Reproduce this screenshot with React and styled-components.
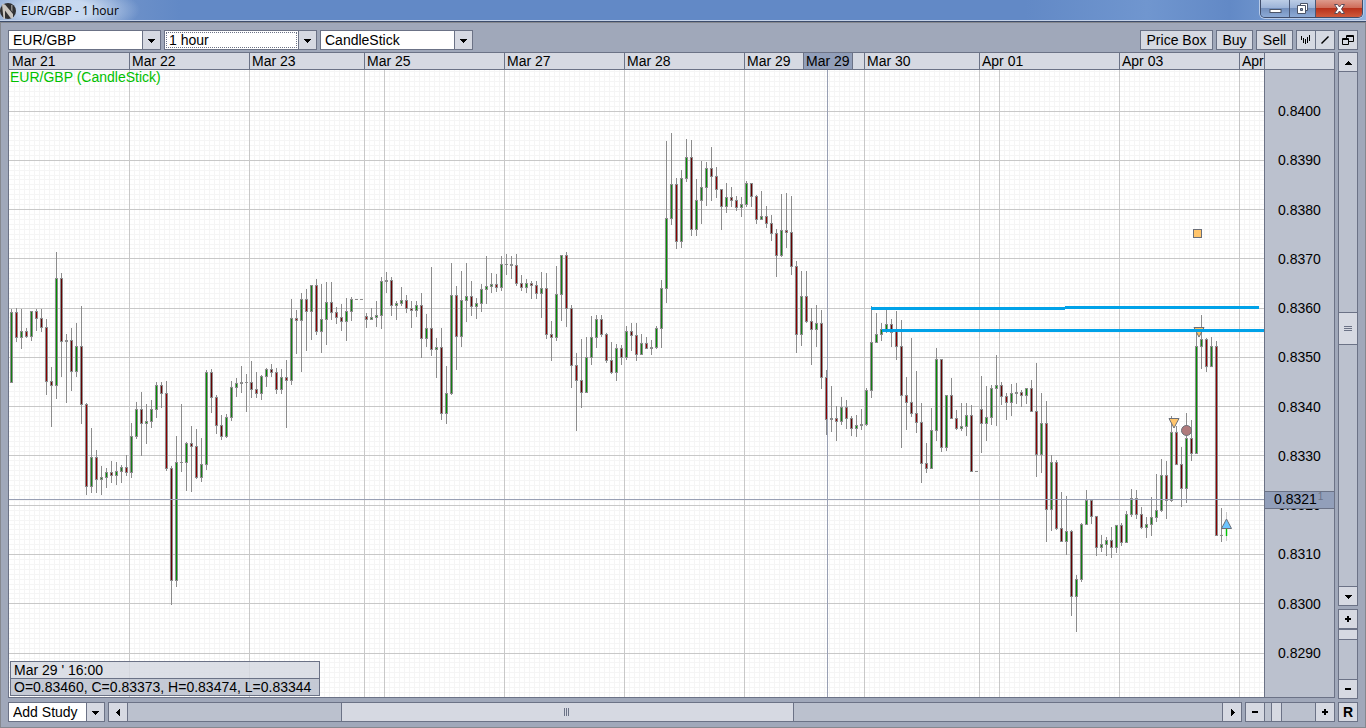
import React from "react";
import styled, { createGlobalStyle, css } from "styled-components";

const color = {
  frame: "#a0a8ba",
  line: "#6b7286",
  face: "#d6d9e2",
  track: "#bbc1ce",
  mark: "#929fba",
  grid: "#c8c8c8",
  fine: "#f5f5f5",
  candle: "#8c8c8c",
  trend: "#00a2e8",
};

const Global = createGlobalStyle`
  *, *::before, *::after { box-sizing: border-box; }
  body {
    margin: 0;
    font: 14px/16px "Liberation Sans", Arial, sans-serif;
    color: #000;
  }
  button, select { font: inherit; color: inherit; }
`;

const Window = styled.div`
  min-height: 100vh;
  display: flex;
  flex-direction: column;
  background: ${color.frame};
`;

const TitleBar = styled.header`
  display: flex;
  align-items: flex-start;
  height: 22px;
  padding-right: 3px;
  background:
    radial-gradient(ellipse 80px 26px at 60px 10px, rgba(214, 228, 246, 0.85) 40%, rgba(214, 228, 246, 0) 100%),
    linear-gradient(90deg, #86a3d0 0, #6289c6 180px, #6289c6 75%, #7096cf 84%, #6289c6 90%, #8fb2de 100%);
  border-bottom: 1px solid #3d4d6c;
  box-shadow: inset 0 -1px 0 #c3d1e8;
`;

const Title = styled.h1`
  flex: 1;
  margin: 0 0 0 4px;
  font: 12px/21px "Open Sans", "Noto Sans", sans-serif;
`;

const LogoMark = styled.svg`
  width: 17px;
  height: 20px;
`;

const WindowButtons = styled.div`
  display: flex;
  width: 103px;
  height: 18px;
  border: 1px solid #3f4d6b;
  border-top: 0;
  border-radius: 0 0 5px 5px;
  overflow: hidden;
  box-shadow: 0 0 0 1px #b8cbe8;
`;

const WindowButton = styled.button`
  flex: ${(p) => (p.$close ? "0 0 47px" : p.$wide ? "0 0 28px" : "1")};
  display: flex;
  align-items: center;
  justify-content: center;
  padding: 0;
  border: 0;
  border-left: ${(p) => (p.$wide ? "0" : "1px solid #4a5876")};
  background: ${(p) =>
    p.$close
      ? "linear-gradient(#dd9a8c 0, #cf6d5a 45%, #b8321c 50%, #cf5a3c 100%)"
      : "linear-gradient(#bccde6 0, #9db4d8 45%, #7490bd 50%, #8caad6 100%)"};
`;

const Workspace = styled.main`
  flex: 1;
  display: flex;
  flex-direction: column;
  padding: 7px 7px 5px;
  border: 1px solid #85888f;
`;

const Toolbar = styled.div`
  display: flex;
  gap: 3px;
  height: 20px;
  margin-bottom: 2px;
`;

const Spacer = styled.div`
  flex: 1;
`;

const Picker = styled.div`
  display: grid;
  grid-template-columns: 1fr 18px;
  width: ${(p) => p.$width}px;
  height: 20px;
  border: 1px solid ${color.line};
  background: #fff;
`;

const PickerField = styled.select`
  grid-area: 1 / 1 / 2 / 3;
  appearance: none;
  min-width: 0;
  padding: 0 0 0 4px;
  border: 0;
  border-radius: 0;
  background: transparent;
  outline: 0;
`;

const PickerArrow = styled.span`
  grid-area: 1 / 2;
  display: flex;
  align-items: center;
  justify-content: center;
  border-left: 1px solid ${color.line};
  background: ${color.face};
  pointer-events: none;
`;

const FocusRing = styled.span`
  grid-area: 1 / 1;
  margin: 1px;
  border: 1px dotted #6b7286;
  pointer-events: none;
`;

const Button = styled.button`
  display: flex;
  flex: none;
  align-items: center;
  justify-content: center;
  width: ${(p) => p.$width || 20}px;
  height: 20px;
  padding: 0;
  border: 1px solid ${color.line};
  background: ${color.face};
  font-weight: ${(p) => (p.$bold ? 700 : 400)};
  ${(p) => p.$joined && css`margin-left: -4px;`}
`;

const Middle = styled.div`
  flex: 1;
  display: flex;
  gap: 3px;
`;

const ChartPanel = styled.section`
  flex: 1;
  min-width: 0;
  margin-bottom: 1px;
  display: grid;
  grid-template: 17px minmax(620px, 1fr) / minmax(0, 1fr) 70px;
  border: 1px solid ${color.line};
`;

const DateAxis = styled.div`
  display: flex;
  overflow: hidden;
  background: ${color.face};
  border-bottom: 1px solid ${color.line};
`;

const DateCell = styled.span`
  flex: ${(p) => (p.$width ? `0 0 ${p.$width}px` : "1 0 0")};
  overflow: hidden;
  padding-left: 3px;
  white-space: nowrap;
  background: ${(p) => (p.$active ? color.mark : "transparent")};
  & + & {
    padding-left: 2px;
    border-left: 1px solid ${color.line};
  }
`;

const AxisCorner = styled.div`
  background: ${color.face};
  border-left: 1px solid ${color.line};
  border-bottom: 1px solid ${color.line};
`;

const Plot = styled.div`
  position: relative;
  display: flex;
  overflow: hidden;
  background: #fff;
`;

const Drawing = styled.svg`
  flex: 1;
  min-width: 0;
`;

const SeriesName = styled.span`
  position: absolute;
  left: 1px;
  top: 0;
  line-height: 14px;
  color: #00c000;
`;

const Readout = styled.div`
  position: absolute;
  left: 1px;
  bottom: 1px;
  min-width: 310px;
  border: 1px solid ${color.line};
  white-space: nowrap;
`;

const ReadoutRow = styled.div`
  height: 16px;
  padding: 0 3px;
  background: ${(p) => (p.$values ? "rgba(187, 193, 206, 0.85)" : "rgba(214, 217, 226, 0.85)")};
  & + & {
    height: 17px;
    border-top: 1px solid ${color.line};
  }
`;

const PriceAxis = styled.div`
  position: relative;
  display: flex;
  flex-direction: column;
  justify-content: space-between;
  padding: 33px 0 36px 13px;
  background: ${color.track};
  border-left: 1px solid ${color.line};
`;

const PriceTag = styled.span`
  position: absolute;
  top: 421px;
  left: 0;
  right: 0;
  display: flex;
  align-items: flex-start;
  height: 18px;
  padding-left: 9px;
  border: solid ${color.line};
  border-width: 1px 0;
  background: ${color.mark};
  line-height: 15px;
  small {
    margin-left: 1px;
    font-size: 10px;
    line-height: 10px;
    color: #6b7286;
  }
`;

const SideColumn = styled.div`
  display: flex;
  flex-direction: column;
  gap: 3px;
  width: 20px;
`;

const Bar = styled.div`
  display: flex;
  flex-direction: ${(p) => (p.$vertical ? "column" : "row")};
  flex: ${(p) => (p.$size ? `0 0 ${p.$size}px` : "1")};
  min-width: 0;
  background: ${color.track};
  box-shadow: inset 0 0 0 1px ${color.line};
`;

const Gap = styled.div`
  flex: ${(p) => p.$grow || 0} 1 ${(p) => p.$basis || 0}px;
`;

const Thumb = styled.div`
  display: flex;
  align-items: center;
  justify-content: center;
  flex: ${(p) => (p.$grow ? `${p.$grow} 1 0` : `0 0 ${p.$size}px`)};
  border: 1px solid ${color.line};
  background: ${color.face};
`;

const BottomRow = styled.div`
  display: flex;
  gap: 3px;
  height: 20px;
  margin-top: 3px;
`;

/* Hourly candles five pixels apart: direction, high, body top, body bottom, low.
   "u" rises, "d" falls, "n" closes where it opened. */
const candles = `
u309,312,383,383 d308,312,338,342 u309,331,338,349 d328,331,337,338 u311,311,337,341 d309,311,319,331
d309,318,328,332 d319,327,382,395 d367,381,386,427 u252,278,386,399 d273,278,342,377 n334,340,342,403
d328,340,372,391 u323,346,372,377 d306,346,405,424 d403,404,487,495 u428,457,487,493 d450,457,480,493
u466,477,480,495 u468,472,478,488 d461,472,476,483 u462,471,476,485 u465,467,472,483 d455,467,473,476
u423,436,473,478 u402,409,437,439 d392,409,424,456 u404,421,424,444 u400,409,422,428 u382,385,410,418
d382,385,394,408 d381,393,469,471 d466,468,581,605 u436,462,581,587 n404,462,463,472 u442,443,463,491
d426,443,447,492 d429,446,478,479 u438,464,478,482 u370,372,465,470 d369,372,398,413 d395,397,426,434
d415,425,437,440 u414,417,437,438 u381,387,418,421 u378,383,388,397 n366,382,384,393 n374,382,383,412
d361,382,390,398 d372,389,394,398 u375,376,394,400 u368,369,377,387 d364,369,373,377 d368,372,390,394
u369,377,390,394 d360,377,381,428 u299,318,381,385 d310,318,321,354 u293,299,321,372 d289,299,312,351
u285,285,312,340 d279,285,332,335 u284,319,332,353 u282,302,320,345 d282,302,313,320 d307,312,318,324
d304,317,322,331 u298,311,322,341 u297,299,312,321 n299,299,300,300 n299,299,300,300 d313,316,320,328
u308,317,320,320 u301,315,318,327 u277,281,316,329 n272,280,282,293 d277,280,306,316 u301,303,306,320
u287,300,304,306 d295,300,309,313 d301,308,311,328 u301,305,311,317 d293,305,339,358 u314,328,339,347
d267,328,350,356 u338,347,350,378 d328,347,414,420 u366,393,414,424 u263,295,394,395 d286,295,337,370
u271,300,337,347 u263,296,301,322 d281,296,307,316 u298,303,307,319 u284,289,304,312 u256,286,290,304
u273,284,287,293 d274,284,288,292 u256,264,288,291 n254,264,265,275 n256,264,266,279 d254,265,284,286
d275,283,288,291 u279,283,288,293 d281,283,286,299 d281,285,294,299 u272,288,294,318 d273,288,335,339
d321,334,338,361 u266,294,338,341 u255,255,295,321 d252,255,309,327 d305,308,366,388 d353,365,381,431
d339,380,393,408 u337,357,393,393 u316,337,358,365 u315,319,338,348 d315,319,335,337 d333,334,361,363
d342,360,373,374 u344,348,373,381 d345,348,358,365 u326,331,358,360 d323,331,336,351 d323,335,355,361
u334,343,355,355 d337,343,349,349 n340,347,349,355 u326,328,348,349 u280,288,329,348 u141,218,289,303
u133,184,219,225 d178,184,242,249 u170,178,242,248 u139,157,179,182 d140,157,230,236 u179,200,230,236
u161,187,201,224 u162,168,188,206 d147,168,177,201 d167,176,190,198 d189,189,207,230 u183,197,207,213
d187,197,201,207 d196,200,208,211 u197,204,208,217 u181,183,205,207 d183,183,197,207 d195,196,220,224
u191,216,220,220 d206,216,224,228 d215,223,234,241 d229,233,256,277 u194,230,256,257 d193,230,233,248
d196,232,267,275 d261,266,335,353 u271,296,335,346 d271,296,322,323 d308,321,330,365 u305,323,330,347
d310,323,378,389 d370,377,420,435 n386,418,420,432 d406,418,422,441 u397,407,422,425 d400,407,419,429
d416,418,429,436 u415,425,429,437 n409,424,426,430 u388,390,425,426 u306,342,391,398 u313,334,343,343
u323,329,335,341 u310,324,331,333 d319,324,333,347 d311,331,347,360 d320,346,396,448 d377,395,403,430
d338,402,414,417 d371,413,423,433 d403,422,464,483 d443,463,469,473 u408,430,469,469 u348,359,431,441
d359,359,448,452 u395,395,448,451 d378,395,419,419 d410,418,429,430 u403,426,429,431 u403,415,427,436
d405,415,472,472 n471,471,472,472 d376,409,424,453 u386,417,424,441 u385,388,418,425 u355,385,389,426
d382,385,397,405 d393,396,403,420 u384,393,403,416 n383,392,394,404 d390,392,396,407 u388,388,396,404
d380,388,412,412 d363,411,455,477 u393,423,455,473 d401,423,510,542 u455,462,510,531 d460,462,529,530
d492,528,542,542 u496,531,542,555 d530,531,597,616 u575,579,597,632 u523,524,580,582 u490,500,525,525
d500,500,517,524 d516,516,548,556 u535,544,548,552 u537,540,545,556 d527,540,548,558 u525,525,548,553
d523,525,543,546 u511,514,543,543 u489,498,515,517 d490,498,515,519 d507,514,528,529 u517,524,528,538
u497,517,525,536 u474,510,518,522 u459,475,511,512 d461,475,501,519 u416,432,501,502 d426,432,465,465
d447,464,489,507 u413,438,489,503 d420,438,454,461 u333,346,454,454 u315,339,347,369 d338,339,367,372
u337,346,367,367 d341,346,536,536 n508,535,536,542`
  .trim()
  .split(/\s+/)
  .map((entry, i) => {
    const [high, top, bottom, low] = entry.slice(1).split(",").map(Number);
    return { x: 11 + i * 5, dir: entry[0], high, top, bottom, low };
  });

const coreColor = (dir, x) => {
  const strong = x % 2 === 0;
  if (dir === "u") return strong ? "#009000" : "#147d14";
  return strong ? "#8c0000" : "#640000";
};

function Candle({ x, dir, high, top, bottom, low }) {
  return (
    <g>
      <rect x={x} y={high} width="1" height={low - high} fill={color.candle} />
      <rect x={x - 1} y={top} width="3" height={bottom - top} fill={color.candle} />
      {dir !== "n" && bottom - top > 2 && (
        <rect x={x} y={top + 1} width="1" height={bottom - top - 2} fill={coreColor(dir, x)} />
      )}
    </g>
  );
}

const dayLines = [129, 249, 364, 384, 504, 624, 744, 864, 979, 999, 1119, 1239];
const priceY = (step) => Math.floor(111 + step * 4.928);
const fineColumns = Array.from({ length: 400 }, (_, i) => 14 + i * 5);
const fineRows = Array.from({ length: 128 }, (_, i) => i - 8);

function CandleChart() {
  return (
    <Drawing role="img" aria-label="EUR/GBP hourly candlestick chart">
      <g transform="translate(-9 -70)" shapeRendering="crispEdges">
        {fineColumns.map((x) => (
          <rect key={x} x={x} y="70" width="1" height="100%" fill={color.fine} />
        ))}
        {fineRows.map((n) => (
          <rect key={n} x="9" y={priceY(n)} width="100%" height="1" fill={color.fine} />
        ))}
        {fineRows.filter((n) => n >= 0 && n % 10 === 0).map((n) => (
          <rect key={n} x="9" y={priceY(n)} width="100%" height="1" fill={color.grid} />
        ))}
        {dayLines.map((x) => (
          <rect key={x} x={x} y="70" width="1" height="100%" fill={color.grid} />
        ))}
        {candles.map((c) => <Candle key={c.x} {...c} />)}
        <rect x="1226" y="512" width="1" height="29" fill="#c8c8c8" />
        <rect x="1225" y="527" width="3" height="9" fill="#c8e6c8" />
        <rect x="1226" y="527" width="1" height="9" fill="#00c800" />
        <rect x="827" y="70" width="1" height="100%" fill="#989fb4" />
        <rect x="9" y="499" width="100%" height="1" fill="#989fb4" />
      </g>
      <g transform="translate(-9 -70)" stroke="#6b6f78" strokeWidth="1">
        <rect x="1193.5" y="229.5" width="8" height="8" fill="#ffc56c" />
        <path d="M1194 327.5h10l-5 9.5z" fill="#ffc56c" />
        <path d="M1169 418.5h10l-5 9.5z" fill="#ffc56c" />
        <circle cx="1186.5" cy="430.5" r="5" fill="#b07a7c" />
        <path d="M1221.5 528.5h10l-5-9.5z" fill="#6cc4ff" />
      </g>
      <g transform="translate(-9 -70)" fill={color.trend}>
        <rect x="871" y="307" width="194" height="3" />
        <rect x="1065" y="306" width="194" height="3" />
        <rect x="882" y="329" width="383" height="3" />
      </g>
    </Drawing>
  );
}

const arrows = {
  down: "M0 2h7v1h-1v1h-1v1h-1v1h-1v-1h-1v-1h-1v-1h-1z",
  up: "M0 6h7v-1h-1v-1h-1v-1h-1v-1h-1v1h-1v1h-1v1h-1z",
  left: "M5 0v7h-1v-1h-1v-1h-1v-1h-1v-1h1v-1h1v-1h1v-1z",
  right: "M2 0v7h1v-1h1v-1h1v-1h1v-1h-1v-1h-1v-1h-1v-1z",
  plus: "M2 0h2v2h2v2h-2v2h-2v-2h-2v-2h2z",
  minus: "M0 2h6v2h-6z",
};

function Glyph({ name }) {
  return (
    <svg width="7" height="7" shapeRendering="crispEdges" aria-hidden="true">
      <path d={arrows[name]} />
    </svg>
  );
}

function Dropdown({ label, value, width, focused }) {
  return (
    <Picker $width={width}>
      <PickerField aria-label={label} defaultValue={value}>
        <option>{value}</option>
      </PickerField>
      {focused && <FocusRing />}
      <PickerArrow><Glyph name="down" /></PickerArrow>
    </Picker>
  );
}

function Logo() {
  return (
    <LogoMark viewBox="0 0 17 20" aria-hidden="true">
      <circle cx="8" cy="11" r="8" fill="#303032" />
      <path d="M2 4l3 .5 8 9.500V18l-2 .5L5 10.500V19H3.500z" fill="#c9c5c0" />
      <path d="M11 5h1.500v7L11 10z" fill="#8f8d8b" />
    </LogoMark>
  );
}

const days = [
  ["Mar 21", 120], ["Mar 22", 120], ["Mar 23", 115], ["Mar 25", 140], ["Mar 27", 120], ["Mar 28", 120],
  ["Mar 29", 59], ["Mar 29", 49, true], ["", 12], ["Mar 30", 115], ["Apr 01", 140], ["Apr 03", 120], ["Apr"],
];

const prices = ["0.8400", "0.8390", "0.8380", "0.8370", "0.8360", "0.8350", "0.8340", "0.8330", "0.8320", "0.8310", "0.8300", "0.8290"];

export default function App() {
  return (
    <Window>
      <Global />
      <TitleBar>
        <Logo />
        <Title>EUR/GBP - 1 hour</Title>
        <WindowButtons>
          <WindowButton $wide aria-label="Minimize">
            <svg width="13" height="16"><rect x="1" y="8.500" width="11" height="3" fill="#fff" stroke="#4b5468" /></svg>
          </WindowButton>
          <WindowButton aria-label="Restore">
            <svg width="13" height="16" stroke="#4b5468" fill="#fff">
              <path d="M4.500 2.500h7v7h-7z" />
              <path d="M1.500 4.500h8v8h-8z" />
              <path d="M4.500 7.500h2v2h-2z" fill="#7f98c0" />
            </svg>
          </WindowButton>
          <WindowButton $close aria-label="Close">
            <svg width="13" height="16">
              <path d="M1.500 3.500h3l2 2.500 2-2.500h3l-3 4.500 3 4.500h-3l-2-2.500-2 2.500h-3l3-4.500z" fill="#fff" stroke="#5b4b58" />
            </svg>
          </WindowButton>
        </WindowButtons>
      </TitleBar>

      <Workspace>
        <Toolbar>
          <Dropdown label="Instrument" value="EUR/GBP" width={153} />
          <Dropdown label="Period" value="1 hour" width={153} focused />
          <Dropdown label="Chart type" value="CandleStick" width={153} />
          <Spacer />
          <Button $width={73}>Price Box</Button>
          <Button $width={37}>Buy</Button>
          <Button $width={37}>Sell</Button>
          <Button aria-label="Chart style">
            <svg width="10" height="10" shapeRendering="crispEdges">
              <path d="M0 1h1v4h-1zM2 3h1v5h-1zM4 4h1v5h-1zM6 2h1v6h-1zM8 0h1v6h-1z" />
            </svg>
          </Button>
          <Button $joined aria-label="Draw line">
            <svg width="10" height="10"><path d="M1.500 8.500l7-7" stroke="#000" strokeWidth="1.500" /></svg>
          </Button>
          <Button aria-label="Detach window">
            <svg width="12" height="12" fill="none" stroke="#000">
              <path d="M4.500 1.500h7v6h-7zM4 2.500h7" />
              <path d="M.5 4.500h6v6h-6zM1 5.500h6" fill={color.face} />
            </svg>
          </Button>
        </Toolbar>

        <Middle>
          <ChartPanel>
            <DateAxis>
              {days.map(([label, width, active], i) => (
                <DateCell key={i} $width={width} $active={active}>{label}</DateCell>
              ))}
            </DateAxis>
            <AxisCorner />
            <Plot>
              <CandleChart />
              <SeriesName>EUR/GBP (CandleStick)</SeriesName>
              <Readout>
                <ReadoutRow>Mar 29 ' 16:00</ReadoutRow>
                <ReadoutRow $values>O=0.83460, C=0.83373, H=0.83474, L=0.83344</ReadoutRow>
              </Readout>
            </Plot>
            <PriceAxis>
              {prices.map((p) => <span key={p}>{p}</span>)}
              <PriceTag>0.8321<small>1</small></PriceTag>
            </PriceAxis>
          </ChartPanel>

          <SideColumn>
            <Bar $vertical>
              <Button aria-label="Scroll up"><Glyph name="up" /></Button>
              <Gap $grow={240} />
              <Thumb $size={33}>
                <svg width="8" height="6" shapeRendering="crispEdges"><path d="M0 0h8v1H0zM0 2h8v1H0zM0 4h8v1H0z" fill={color.line} /></svg>
              </Thumb>
              <Gap $grow={241} />
              <Button aria-label="Scroll down"><Glyph name="down" /></Button>
            </Bar>
            <Bar $vertical $size={90}>
              <Button aria-label="Zoom in prices"><Glyph name="plus" /></Button>
              <Thumb $size={11} />
              <Gap $grow={1} />
              <Button aria-label="Zoom out prices"><Glyph name="minus" /></Button>
            </Bar>
          </SideColumn>
        </Middle>

        <BottomRow>
          <Dropdown label="Add Study" value="Add Study" width={97} />
          <Bar>
            <Button aria-label="Scroll left"><Glyph name="left" /></Button>
            <Gap $grow={213} />
            <Thumb $grow={452}>
              <svg width="6" height="8" shapeRendering="crispEdges"><path d="M0 0h1v8H0zM2 0h1v8H2zM4 0h1v8H4z" fill={color.line} /></svg>
            </Thumb>
            <Gap $grow={429} />
            <Button aria-label="Scroll right"><Glyph name="right" /></Button>
          </Bar>
          <Bar $size={90}>
            <Button aria-label="Zoom out time"><Glyph name="minus" /></Button>
            <Gap $basis={6} />
            <Thumb $size={11} />
            <Gap $grow={1} />
            <Button aria-label="Zoom in time"><Glyph name="plus" /></Button>
          </Bar>
          <Button $bold>R</Button>
        </BottomRow>
      </Workspace>
    </Window>
  );
}
